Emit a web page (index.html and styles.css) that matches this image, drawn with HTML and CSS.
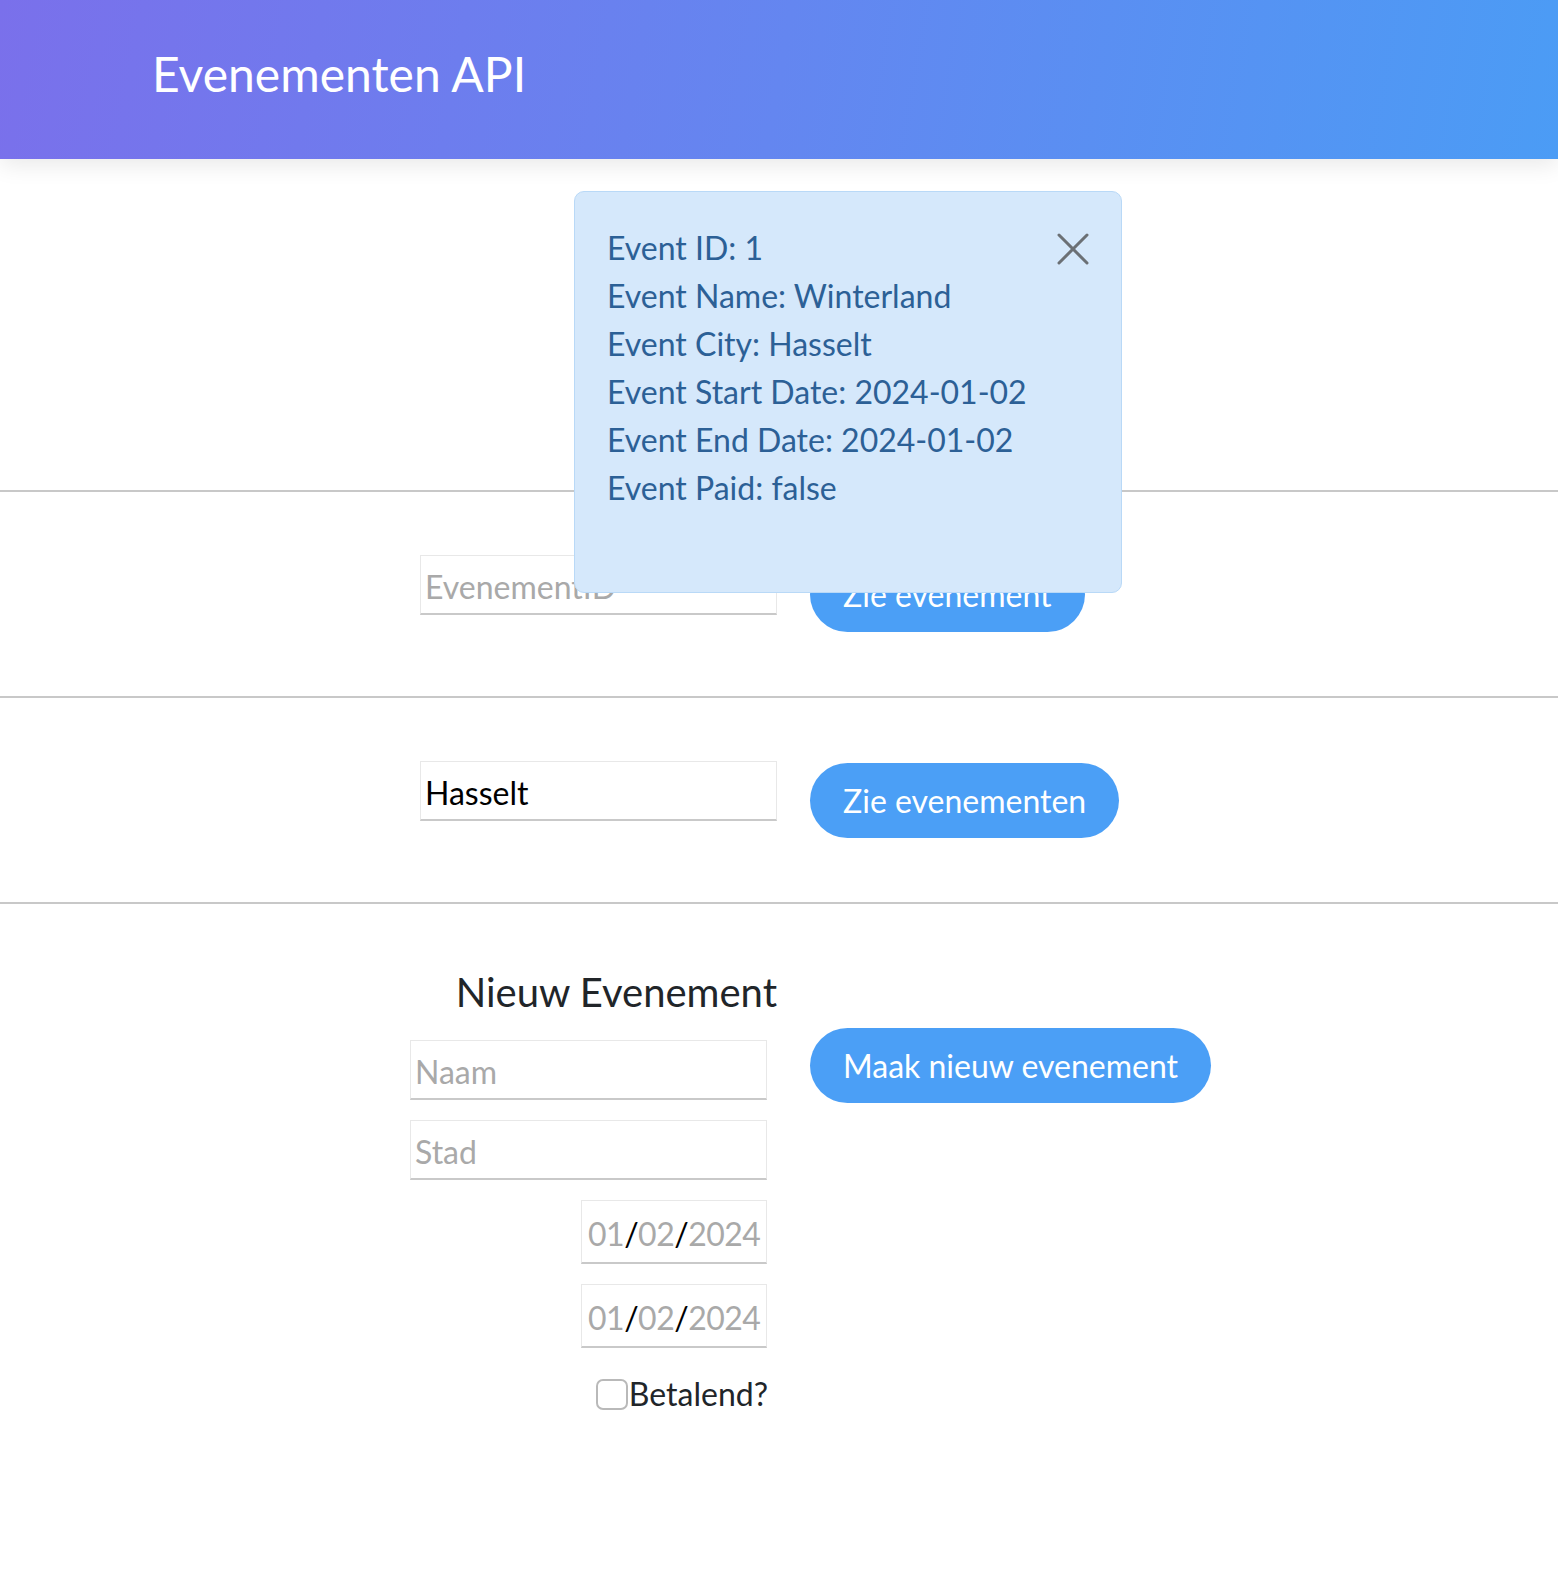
FILE: index.html
```html
<!DOCTYPE html>
<html lang="nl">
<head>
<meta charset="utf-8">
<title>Evenementen API</title>
<link rel="stylesheet" href="styles.css">
</head>
<body>
<header class="topbar">
  <h1 class="brand">Evenementen API</h1>
</header>
<main class="page">
  <section class="results"></section>
  <hr class="divider">
  <section class="row">
    <div class="col-left"><input class="field" type="text" placeholder="EvenementID"></div>
    <div class="col-right"><button class="pill" type="button">Zie evenement</button></div>
  </section>
  <hr class="divider">
  <section class="row">
    <div class="col-left"><input class="field" type="text" value="Hasselt"></div>
    <div class="col-right"><button class="pill" type="button">Zie evenementen</button></div>
  </section>
  <hr class="divider">
  <section class="row create">
    <div class="col-left create-left">
      <h2 class="create-title">Nieuw Evenement</h2>
      <input class="field" type="text" placeholder="Naam">
      <input class="field" type="text" placeholder="Stad">
      <input class="field date" type="date" value="2024-01-02">
      <input class="field date" type="date" value="2024-01-02">
      <label class="check"><input class="check-box" type="checkbox">Betalend?</label>
    </div>
    <div class="col-right"><button class="pill pill-create" type="button">Maak nieuw evenement</button></div>
  </section>
</main>
<div class="alert" role="alert">
  <div class="alert-line">Event ID: 1</div>
  <div class="alert-line">Event Name: Winterland</div>
  <div class="alert-line">Event City: Hasselt</div>
  <div class="alert-line">Event Start Date: 2024-01-02</div>
  <div class="alert-line">Event End Date: 2024-01-02</div>
  <div class="alert-line">Event Paid: false</div>
  <button class="alert-close" type="button" aria-label="Sluiten">
    <svg width="32" height="32" viewBox="0 0 32 32"><path d="M2 2 L30 30 M30 2 L2 30" stroke="#6b7075" stroke-width="3" stroke-linecap="round" fill="none"/></svg>
  </button>
</div>
</body>
</html>
```
FILE: styles.css
```css
* { box-sizing: border-box; }
html, body { margin: 0; padding: 0; background: #fff; }
body {
  font-family: Lato, "Open Sans", "Liberation Sans", sans-serif;
  color: #212529;
  font-size: 32px;
  position: relative;
  min-height: 1576px;
}
.topbar {
  height: 159px;
  padding: 45px 0 0 152px;
  background: linear-gradient(100deg, #7a70eb 0%, #6486f0 50%, #4b9cf5 100%);
  box-shadow: 0 6px 22px rgba(0, 0, 0, 0.09);
  position: relative;
  z-index: 1;
}
.brand {
  margin: 0;
  font-size: 48px;
  font-weight: 400;
  line-height: 1.2;
  color: #fff;
}
.results { height: 331px; }
.divider {
  margin: 0;
  border: 0;
  height: 2px;
  background: #c8c8c8;
}
.row {
  display: grid;
  grid-template-columns: 1fr 1fr;
  padding: 63px 0 64px;
}
.col-left {
  display: flex;
  justify-content: flex-end;
  align-items: flex-start;
  padding-right: 2px;
}
.col-right {
  display: flex;
  justify-content: flex-start;
  align-items: flex-start;
  padding-left: 31px;
}
.field {
  width: 357px;
  height: 60px;
  margin: 0;
  padding: 4px 4px 0;
  font-family: Lato, "Open Sans", sans-serif;
  font-size: 32px;
  color: #000;
  background: #fff;
  border: 1px solid #e8e8e8;
  border-bottom: 2px solid #c9c9c9;
  border-radius: 0;
  outline: none;
}
.field::placeholder { color: #a9a9a9; }
.pill {
  margin-top: 2px;
  height: 75px;
  padding: 0 33px;
  border: 0;
  border-radius: 38px;
  background: #4b9ff6;
  color: #fff;
  font-family: Lato, "Open Sans", sans-serif;
  font-size: 32px;
  line-height: 1;
  white-space: nowrap;
}
.create { padding-top: 64px; }
.create-left {
  flex-direction: column;
  align-items: flex-end;
  padding-right: 12px;
}
.create-title {
  margin: 0 -10px 24px 0;
  font-size: 40px;
  font-weight: 400;
  line-height: 1.2;
  color: #212529;
}
.create-left .field { margin-bottom: 20px; }
.field.date {
  width: 186px;
  height: 64px;
  padding: 4px 4px 0 6px;
  color: #000;
  letter-spacing: -0.5px;
}
.field.date::-webkit-calendar-picker-indicator { display: none; }
.field.date::-webkit-datetime-edit { padding: 0; }
.field.date::-webkit-datetime-edit-fields-wrapper { padding: 0; }
.field.date::-webkit-datetime-edit-month-field,
.field.date::-webkit-datetime-edit-day-field,
.field.date::-webkit-datetime-edit-year-field { color: #a9a9a9; padding: 0; }
.field.date::-webkit-datetime-edit-text { color: #000; padding: 0; }
.check {
  display: flex;
  align-items: center;
  margin-top: 7px;
  margin-right: -1px;
  font-size: 32px;
  line-height: 1.2;
  color: #212529;
}
.check-box {
  appearance: none;
  -webkit-appearance: none;
  width: 32px;
  height: 31px;
  margin: 0 1px 0 0;
  border: 2px solid #b9b9b9;
  border-radius: 7px;
  background: #fff;
}
.pill-create { margin-top: 60px; }
.alert {
  position: absolute;
  left: 574px;
  top: 191px;
  width: 548px;
  padding: 32px 32px 80px 32px;
  background: #d5e8fb;
  border: 1px solid #b9d9f7;
  border-radius: 10px;
  color: #2c6096;
  font-size: 32px;
  line-height: 48px;
  z-index: 5;
}
.alert-close {
  position: absolute;
  top: 40px;
  right: 31px;
  width: 34px;
  height: 34px;
  padding: 1px;
  border: 0;
  background: transparent;
  display: flex;
  align-items: center;
  justify-content: center;
}
```
